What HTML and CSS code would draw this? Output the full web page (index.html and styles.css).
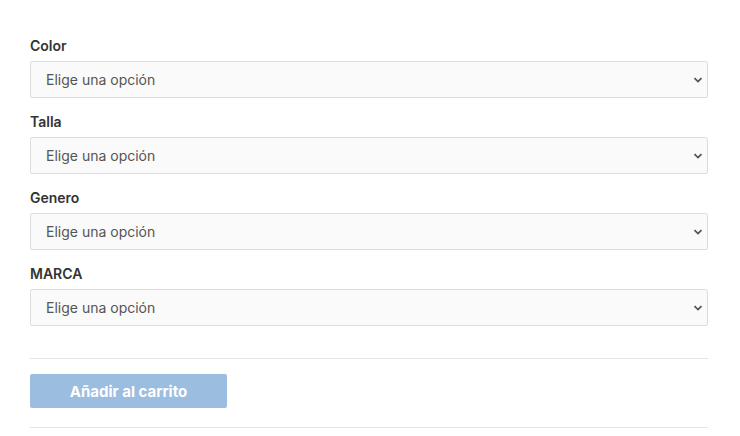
FILE: index.html
```html
<!DOCTYPE html>
<html lang="es">
<head>
  <meta charset="UTF-8" />
  <title>Variaciones</title>
  <link rel="stylesheet" href="styles.css">
</head>
<body>
  <form class="variations">
    <div class="field">
      <label for="color">Color</label>
      <div class="select-wrap">
        <select id="color"><option>Elige una opción</option></select>
        <svg class="chev" width="10" height="6" viewBox="0 0 10 6"><path d="M1.5 1.2 5 4.6 8.5 1.2" fill="none" stroke="#555" stroke-width="1.8"/></svg>
      </div>
    </div>
    <div class="field">
      <label for="talla">Talla</label>
      <div class="select-wrap">
        <select id="talla"><option>Elige una opción</option></select>
        <svg class="chev" width="10" height="6" viewBox="0 0 10 6"><path d="M1.5 1.2 5 4.6 8.5 1.2" fill="none" stroke="#555" stroke-width="1.8"/></svg>
      </div>
    </div>
    <div class="field">
      <label for="genero">Genero</label>
      <div class="select-wrap">
        <select id="genero"><option>Elige una opción</option></select>
        <svg class="chev" width="10" height="6" viewBox="0 0 10 6"><path d="M1.5 1.2 5 4.6 8.5 1.2" fill="none" stroke="#555" stroke-width="1.8"/></svg>
      </div>
    </div>
    <div class="field">
      <label for="marca">MARCA</label>
      <div class="select-wrap">
        <select id="marca"><option>Elige una opción</option></select>
        <svg class="chev" width="10" height="6" viewBox="0 0 10 6"><path d="M1.5 1.2 5 4.6 8.5 1.2" fill="none" stroke="#555" stroke-width="1.8"/></svg>
      </div>
    </div>

    <div class="cart">
      <button type="button" class="add-btn" disabled>Añadir al carrito</button>
    </div>
  </form>
</body>
</html>
```

FILE: styles.css
```css
body {
  font-family: 'Inter', 'Liberation Sans', sans-serif;
  background: #fff;
  color: #333;
  margin: 0;
  padding: 36px 32px 0 30px;
}
.variations {
  margin: 0;
}
.field {
  margin-bottom: 14px;
}
.field label {
  display: block;
  font-size: 14px;
  font-weight: 600;
  line-height: 20px;
  margin-bottom: 5px;
  color: #333;
}
.select-wrap {
  position: relative;
}
.select-wrap select {
  display: block;
  width: 100%;
  height: 37px;
  padding: 0 15px;
  font-family: inherit;
  font-size: 14px;
  color: #555;
  background: #fafafa;
  border: 1px solid #ddd;
  border-radius: 2px;
  appearance: none;
  -webkit-appearance: none;
  outline: none;
}
.chev {
  position: absolute;
  right: 5px;
  top: 16px;
  pointer-events: none;
}
.cart {
  margin-top: 32px;
  border-top: 1px solid #e5e5e5;
  border-bottom: 1px solid #e5e5e5;
  padding: 15px 0 19px;
}
.add-btn {
  display: block;
  width: 197px;
  height: 34px;
  font-family: inherit;
  font-size: 15px;
  font-weight: 700;
  color: #fff;
  background: #9bbde0;
  border: none;
  border-radius: 2px;
}
```
